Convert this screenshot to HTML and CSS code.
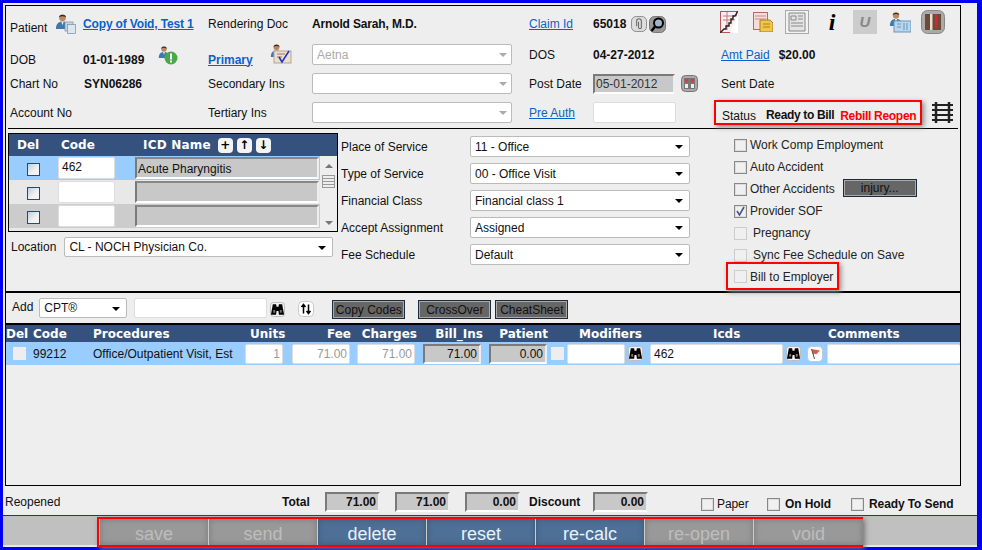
FILE: index.html
```html
<!DOCTYPE html>
<html lang="en">
<head>
<meta charset="utf-8">
<title>Claim</title>
<link rel="stylesheet" href="styles.css">
</head>
<body>
<svg class="defs" width="0" height="0" aria-hidden="true">
  <symbol id="person" viewBox="0 0 16 18">
    <circle cx="8" cy="5" r="3.6" fill="#b98a62"/><path d="M4.2 4.5C4.5 1 11.5 1 11.8 4.5 9 3 7 3 4.2 4.5Z" fill="#3a2a1c"/>
    <path d="M1 17c0-6 3-8 7-8s7 2 7 8Z" fill="#3f78ad"/><path d="M6.7 9h2.6L8 13Z" fill="#e8eef5"/>
  </symbol>
  <symbol id="binoc" viewBox="0 0 16 16">
    <rect x=".5" y=".5" width="15" height="15" rx="3" fill="#f2f2f2" stroke="#bbb"/>
    <path d="M3 2.500h3.500l.5 2.500h2l.5-2.500H13l2 11H9.500L9 9.500H7l-.5 4H1Z" fill="#000"/>
    <path d="M3.500 8.500h2v3h-2ZM10.500 8.500h2v3h-2Z" fill="#777"/>
  </symbol>
  <symbol id="roundbtn" viewBox="0 0 16 16">
    <rect x=".5" y=".5" width="15" height="15" rx="4" fill="#fff" stroke="#c8c8c8"/>
  </symbol>
</svg>

<div class="window">
  <div class="frame">
    <section class="header">
      <span class="label lower">Patient</span>
      <span class="with-icon span-val r1">
        <svg class="ico-pat" width="22" height="22" viewBox="0 0 22 22"><use href="#person" x="0" y="0" width="15" height="17"/><rect x="10" y="9" width="8" height="9" fill="#c5d4e3" stroke="#7a8ea3" stroke-width=".7"/><rect x="12.500" y="11.500" width="8" height="9" fill="#dce6f0" stroke="#7a8ea3" stroke-width=".7"/></svg>
        <a class="link bold tight" href="#">Copy of Void, Test 1</a>
      </span>
      <span class="label r1">Rendering Doc</span>
      <span class="value r1 doc">Arnold Sarah, M.D.</span>
      <a class="link r1" href="#">Claim Id</a>
      <span class="value claim-id r1">65018
        <svg class="ico-clip" width="16" height="16" viewBox="0 0 17 17"><rect x=".5" y=".5" width="16" height="16" rx="5" fill="#ddd" stroke="#888"/><path d="M6 11V5.500a2.200 2.200 0 0 1 5 0V12a1.400 1.400 0 0 1-3 0V6" fill="none" stroke="#666" stroke-width="1.100"/></svg>
        <svg class="ico-mag" width="17" height="17" viewBox="0 0 17 17"><rect x=".5" y=".5" width="16" height="16" rx="5" fill="#999" stroke="#777"/><circle cx="9.500" cy="7" r="4.500" fill="#9fb4c8" stroke="#000" stroke-width="2"/><path d="M6 10.500 2.500 15" stroke="#000" stroke-width="2.500"/></svg>
      </span>
      <div class="tools">
        <svg width="18" height="22" viewBox="0 0 18 22"><rect x=".5" y=".5" width="16" height="21" fill="#fbeeee" stroke="#b55"/><path d="M3 5h12M3 9h12M7 1v18" stroke="#c77"/><path d="M10 22h8V1Z" fill="#fff"/><path d="M0 22 4 18h2v-3h3v-3h2V8h2V5h2l3-5" fill="none" stroke="#222" stroke-width="1.400"/></svg>
        <svg width="20" height="20" viewBox="0 0 20 20"><rect x=".5" y=".5" width="14" height="17" fill="#f6dcd8" stroke="#b66"/><path d="M2 4h11M2 7h11" stroke="#c88"/><path d="M7 8h10l3 3v9H7Z" fill="#f2c64c" stroke="#a87f20"/><path d="M10 12h7M10 15h7" stroke="#a87f20"/></svg>
        <svg width="24" height="24" viewBox="0 0 24 24"><rect x=".5" y=".5" width="23" height="23" fill="#f2f2f2" stroke="#aaa"/><path d="M4 3h16v18H4Z" fill="#e4e4e4" stroke="#888"/><path d="M6 6h5v4H6ZM13 6h5M13 9h5M6 13h12M6 16h12" fill="none" stroke="#888"/></svg>
        <span class="tool-i">i</span>
        <span class="tool-u">U</span>
        <svg width="22" height="22" viewBox="0 0 22 22"><use href="#person" x="0" y="0" width="14" height="16"/><rect x="5" y="10" width="17" height="11" fill="#b9d6ef" stroke="#6d94b8"/><path d="M8 13h4M8 16h4M15 12v7M18 12v7" stroke="#6d94b8"/></svg>
        <svg width="24" height="24" viewBox="0 0 24 24"><rect x=".5" y=".5" width="23" height="23" rx="6" fill="#aaa" stroke="#888"/><rect x="4" y="4" width="16" height="16" fill="#6b4a38"/><rect x="9" y="4" width="2.500" height="16" fill="#e9dccf"/><rect x="14" y="4" width="2.500" height="11" fill="#d23"/><rect x="14" y="16" width="2.500" height="2" fill="#d23"/></svg>
      </div>

      <span class="label lower">DOB</span>
      <span class="value with-icon lower dob">01-01-1989
        <svg class="ico-alert" width="20" height="20" viewBox="0 0 20 20"><use href="#person" x="0" y="0" width="12" height="14"/><circle cx="13" cy="13" r="6.500" fill="#4aa84a"/><rect x="12" y="8.500" width="2" height="6" fill="#fff"/><rect x="12" y="15.500" width="2" height="2" fill="#fff"/></svg>
      </span>
      <span class="with-icon lower primary">
        <a class="link bold" href="#">Primary</a>
        <svg class="ico-prim" width="22" height="22" viewBox="0 0 22 22"><use href="#person" x="0" y="0" width="13" height="15"/><rect x="4" y="8" width="17" height="12" fill="#eadfce" stroke="#b7a68f"/><path d="M7 11h8M7 14h5" stroke="#b07060"/><path d="M9 14l3 5 7-11" fill="none" stroke="#2233cc" stroke-width="1.600"/></svg>
      </span>
      <div class="select disabled"><span>Aetna</span><i class="caret grey"></i></div>
      <span class="label">DOS</span>
      <span class="value">04-27-2012</span>
      <div class="right-cell amt"><a class="link" href="#">Amt Paid</a><span class="value">$20.00</span></div>

      <span class="label">Chart No</span>
      <span class="value span-val chart">SYN06286</span>
      <span class="label">Secondary Ins</span>
      <div class="select"><i class="caret grey"></i></div>
      <span class="label">Post Date</span>
      <span class="post-date">
        <span class="ro date">05-01-2012</span>
        <svg width="17" height="17" viewBox="0 0 17 17"><rect x=".5" y=".5" width="16" height="16" rx="4" fill="#aaa" stroke="#777"/><rect x="3" y="3" width="11" height="11" fill="#777"/><path d="M4 4h3v3H4ZM10 4h3v3h-3Z" fill="#e33"/><path d="M4 9h3v4H4ZM10 9h3v4h-3Z" fill="#eee"/></svg>
      </span>
      <span class="label right-cell sent">Sent Date</span>

      <span class="label">Account No</span>
      <span class="span-val"></span>
      <span class="label">Tertiary Ins</span>
      <div class="select"><i class="caret grey"></i></div>
      <a class="link" href="#">Pre Auth</a>
      <span class="input pre-auth"></span>
      <div class="right-cell status-wrap">
        <div class="status-box">
          <span class="label status-l">Status</span>
          <span class="value status-v">Ready to Bill</span>
          <span class="rebill">Rebill Reopen</span>
        </div>
        <svg class="ico-track" width="21" height="21" viewBox="0 0 21 21"><path d="M4 0v21M17 0v21" stroke="#222" stroke-width="2.500"/><path d="M0 3h21M0 8h21M0 13h21M0 18h21" stroke="#222" stroke-width="2.200"/></svg>
      </div>
    </section>
    <div class="rule-thin"></div>

    <section class="mid">
      <div class="mid-left">
        <div class="icd">
          <div class="icd-main">
            <div class="icd-head">
              <span class="h-del">Del</span><span class="h-code">Code</span><span class="h-name">ICD Name</span>
              <span class="mini">+</span><span class="mini">↑</span><span class="mini">↓</span>
            </div>
            <div class="icd-row sel">
              <span class="cell-del"><i class="cb-blue"></i></span><span class="input code">462</span><span class="ro name">Acute Pharyngitis</span>
            </div>
            <div class="icd-row alt1">
              <span class="cell-del"><i class="cb-blue"></i></span><span class="input code"></span><span class="ro name"></span>
            </div>
            <div class="icd-row alt2">
              <span class="cell-del"><i class="cb-blue"></i></span><span class="input code"></span><span class="ro name"></span>
            </div>
            <div class="icd-row alt1 stub"></div>
          </div>
          <div class="scroll">
            <i class="arrow up"></i>
            <span class="thumb"></span>
            <i class="arrow down"></i>
          </div>
        </div>
        <div class="location">
          <span class="label">Location</span>
          <div class="select loc"><span>CL - NOCH Physician Co.</span><i class="caret"></i></div>
        </div>
      </div>

      <div class="mid-fields">
        <span class="label">Place of Service</span><div class="select wide"><span>11 - Office</span><i class="caret"></i></div>
        <span class="label">Type of Service</span><div class="select wide"><span>00 - Office Visit</span><i class="caret"></i></div>
        <span class="label">Financial Class</span><div class="select wide"><span>Financial class 1</span><i class="caret"></i></div>
        <span class="label">Accept Assignment</span><div class="select wide"><span>Assigned</span><i class="caret"></i></div>
        <span class="label">Fee Schedule</span><div class="select wide"><span>Default</span><i class="caret"></i></div>
      </div>

      <div class="mid-checks">
        <div class="chk"><i class="cb"></i>Work Comp Employment</div>
        <div class="chk"><i class="cb"></i>Auto Accident</div>
        <div class="chk"><i class="cb"></i>Other Accidents<button class="btn injury" type="button">injury...</button></div>
        <div class="chk"><i class="cb on"><svg width="11" height="11" viewBox="0 0 11 11"><path d="M2 5l2.500 4L9 1" fill="none" stroke="#45558f" stroke-width="1.600"/></svg></i>Provider SOF</div>
        <div class="chk pad"><i class="cb plain"></i>Pregnancy</div>
        <div class="chk pad"><i class="cb plain"></i>Sync Fee Schedule on Save</div>
        <div class="chk bill"><i class="cb plain"></i>Bill to Employer</div>
      </div>
    </section>
    <div class="rule-thick"></div>

    <section class="add-row">
      <span class="label add-l">Add</span>
      <div class="select cpt"><span>CPT®</span><i class="caret"></i></div>
      <span class="input search"></span>
      <svg class="ico-b" width="15" height="15"><use href="#binoc"/></svg>
      <svg class="ico-sort" width="16" height="16" viewBox="0 0 16 16"><use href="#roundbtn"/><path d="M5.500 3.500v9M3.500 6l2-2.500L7.500 6M10.500 12.500v-9M8.500 10l2 2.500 2-2.500" fill="none" stroke="#000" stroke-width="1.500"/></svg>
      <button class="btn copy" type="button">Copy Codes</button>
      <button class="btn cross" type="button">CrossOver</button>
      <button class="btn cheat" type="button">CheatSheet</button>
    </section>

    <section class="proc">
      <div class="proc-head">
        <span class="p-del">Del</span><span>Code</span><span>Procedures</span>
        <span class="p-units">Units</span><span class="p-r6">Fee</span><span class="p-r6">Charges</span><span class="p-r6">Bill_Ins</span><span class="p-r3">Patient</span>
        <span class="p-mod">Modifiers</span><span class="p-icds">Icds</span><span class="p-com">Comments</span>
      </div>
      <div class="proc-row">
        <span class="p-cb"><i class="cb-flat"></i></span>
        <span>99212</span>
        <span>Office/Outpatient Visit, Est</span>
        <span class="cell"><span class="input num dim units">1</span></span>
        <span class="cell"><span class="input num dim money">71.00</span></span>
        <span class="cell"><span class="input num dim money">71.00</span></span>
        <span class="cell"><span class="ro num money">71.00</span></span>
        <span class="cell"><span class="ro num money">0.00</span></span>
        <span class="cell"><i class="cb-flat small"></i></span>
        <span class="cell"><span class="input modifiers"></span></span>
        <span class="cell"><svg class="ico-b" width="15" height="15"><use href="#binoc"/></svg></span>
        <span class="cell"><span class="input icds">462</span></span>
        <span class="cell"><svg class="ico-b" width="15" height="15"><use href="#binoc"/></svg></span>
        <span class="cell"><svg width="16" height="16" viewBox="0 0 16 16"><use href="#roundbtn"/><path d="M4 3l9 1.500-4 4-1.500-1L6.500 9Z" fill="#e0584a"/><path d="M4.500 3l3 10" stroke="#555"/></svg></span>
        <span class="cell"><span class="input comments"></span></span>
      </div>
    </section>
  </div>

  <footer class="totals">
    <span class="label reopened">Reopened</span>
    <span class="value total-l">Total</span>
    <span class="ro num tot">71.00</span>
    <span class="ro num tot">71.00</span>
    <span class="ro num tot">0.00</span>
    <span class="value disc-l">Discount</span>
    <span class="ro num tot">0.00</span>
    <div class="foot-checks">
      <div class="chk"><i class="cb"></i>Paper</div>
      <div class="chk strong"><i class="cb"></i>On Hold</div>
      <div class="chk strong"><i class="cb"></i>Ready To Send</div>
    </div>
  </footer>

  <nav class="actionbar">
    <div class="actions">
      <button class="act off" type="button">save</button>
      <button class="act off" type="button">send</button>
      <button class="act" type="button">delete</button>
      <button class="act" type="button">reset</button>
      <button class="act" type="button">re-calc</button>
      <button class="act off" type="button">re-open</button>
      <button class="act off" type="button">void</button>
    </div>
  </nav>
</div>
</body>
</html>
```
FILE: styles.css
```css
* { box-sizing: border-box; }
html, body { margin: 0; padding: 0; }
body { width: 982px; height: 550px; overflow: hidden; font: 12px/14px "Liberation Sans", Arial, sans-serif; color: #111; background: #00f; }
.defs { position: absolute; }
i { display: block; font-style: normal; }
svg { display: block; flex: none; }

.window { width: 982px; height: 550px; border: solid #0000f0; border-width: 3px 5px 3px 3px; background: #eee; display: flex; flex-direction: column; }
.frame { margin: 2px 0 0 2px; width: 956px; height: 481px; border: 1px solid #000; flex: none; }

.label { white-space: nowrap; }
.value { font-weight: bold; white-space: nowrap; }
.link { color: #0a62c9; text-decoration: underline; white-space: nowrap; }
.bold { font-weight: bold; }
.tight { letter-spacing: -.15px; }

.header { display: grid; grid-template-columns: 73px 125px 104px 217px 64px 128px 1fr; grid-template-rows: 34px 29px 29px 29px; align-items: center; padding-left: 4px; }
.header > .lower { position: relative; top: 5px; }
.r1 { margin-top: 2px; }
.doc { letter-spacing: -.15px; }
.with-icon { display: flex; align-items: center; white-space: nowrap; }
.span-val { min-width: 0; }
.ico-pat { margin: 0 6px 0 -28px; }
.dob { gap: 14px; }
.ico-alert { margin-top: -9px; }
.primary { gap: 17px; }
.ico-prim { margin-top: -11px; }
.chart { margin-left: 1px; }
.claim-id { display: flex; align-items: center; gap: 2px; }
.ico-clip { margin-left: 3px; }
.tools { display: grid; grid-template-columns: 33px 32px 35px 33px 36px 32px 24px; align-items: center; margin-left: -1px; margin-top: -3px; }
.tool-i { width: 24px; text-align: center; font: italic bold 24px/24px "Liberation Serif", serif; color: #000; }
.tool-u { width: 24px; height: 24px; background: #ccc; color: #888; text-align: center; font: italic bold 15px/24px "Liberation Sans", sans-serif; }
.amt { display: flex; gap: 9px; }
.select { position: relative; height: 21px; width: 200px; background: #fff; border: 1px solid #bbb; border-radius: 2px; display: flex; align-items: center; padding-left: 4px; }
.select.disabled { color: #aaa; }
.caret { position: absolute; right: 6px; top: 8px; width: 0; height: 0; border: solid transparent; border-width: 4px 4px 0; border-top-color: #000; }
.caret.grey { border-top-color: #aaa; right: 4px; }
.input { display: block; height: 21px; background: #fff; border: 1px solid #ddd; border-radius: 2px; line-height: 19px; padding: 0 3px; }
.ro { display: block; height: 20px; background: #c8c8c8; border: 2px solid; border-color: #7a7a7a #eee #fff #7a7a7a; line-height: 16px; padding: 0 1px; }
.num { text-align: right; padding-right: 2px; }
.dim { color: #999; }
.post-date { display: flex; align-items: center; gap: 6px; }
.date { width: 82px; height: 20px; color: #333; }
.pre-auth { width: 83px; }
.status-wrap { display: flex; align-items: center; gap: 10px; margin-left: -7px; }
.status-box { width: 208px; height: 25px; flex: none; border: 2px solid #f00; box-shadow: 2px 2px 5px #888; display: flex; align-items: center; padding-left: 6px; margin-top: -1px; white-space: nowrap; }
.status-l { margin-top: 7px; }
.status-v { margin-left: 10px; margin-top: 6px; letter-spacing: -.35px; }
.rebill { margin-left: 6px; color: #f00; font-weight: bold; margin-top: 8px; letter-spacing: -.3px; }

.rule-thin { height: 1px; margin: 1px 2px 0; background: #000; }
.rule-thick { height: 2px; background: #000; }

.mid { height: 162px; display: flex; padding: 4px 0 0 2px; }
.mid-left { width: 333px; flex: none; }
.icd { width: 330px; height: 99px; border: 1px solid #000; display: flex; overflow: hidden; }
.icd-main { width: 311px; flex: none; }
.icd-head { height: 22px; margin-right: -18px; background: #35527f; color: #fff; font: bold 12px/22px "DejaVu Sans", sans-serif; display: flex; align-items: center; position: relative; z-index: 1; }
.h-del { width: 52px; padding-left: 8px; }
.h-code { width: 82px; }
.h-name { margin-right: 7px; letter-spacing: .2px; }
.mini { width: 15px; height: 15px; margin-right: 4px; background: #f4f4f4; border-radius: 4px; color: #000; text-align: center; font: bold 12px/14px "DejaVu Sans", sans-serif; }
.icd-row { height: 24px; display: flex; align-items: center; }
.icd-row.stub { height: 3px; }
.sel { background: #9cf; }
.alt1 { background: #e8e8e8; }
.alt2 { background: #ccc; }
.cell-del { width: 47px; display: flex; justify-content: center; padding: 3px 0 0 1px; }
.cb-blue { width: 13px; height: 13px; border: 1px solid #1f4e6e; background: linear-gradient(135deg, #bcd0dc, #f2f2f2 60%); }
.code { width: 57px; height: 22px; margin: 0 20px 0 2px; }
.name { width: 184px; height: 22px; line-height: 20px; border-top-color: #888; }
.scroll { width: 18px; display: flex; flex-direction: column; align-items: center; padding-top: 30px; }
.arrow { width: 0; height: 0; border: solid transparent; border-width: 0 4px 4px; border-bottom-color: #777; }
.arrow.down { border-width: 4px 4px 0; border-top-color: #777; border-bottom-color: transparent; margin-top: 33px; }
.thumb { width: 13px; height: 13px; margin-top: 7px; flex: none; background: repeating-linear-gradient(#eee 0 2px, #999 2px 3px); border: 1px solid #999; }
.location { display: flex; align-items: center; margin-top: 5px; padding-left: 3px; gap: 8px; }
.select.loc { width: 269px; height: 20px; }

.mid-fields { width: 349px; flex: none; padding-top: 3px; display: grid; grid-template-columns: 129px 220px; grid-auto-rows: 21px; row-gap: 6px; align-items: center; align-content: start; }
.select.wide { width: 220px; }

.mid-checks { margin-left: 44px; padding-top: 1px; display: flex; flex-direction: column; color: #222; }
.chk { display: flex; flex: none; align-items: center; height: 22px; white-space: nowrap; }
.cb { width: 13px; height: 13px; margin-right: 3px; background: #f0f0f0; border: 1px solid #888; box-shadow: inset 0 0 0 1px #ddd; }
.cb.plain { border-color: #ccc; box-shadow: none; }
.chk.pad .cb { margin-right: 6px; }
.bill { width: 113px; height: 28px; margin: -4px 0 0 -8px; padding: 1px 0 0 6px; border: 2px solid #f00; box-shadow: 2px 2px 5px #888; }
.btn { font: 12px/14px "Liberation Sans", sans-serif; color: #111; background: #666; border: 1px solid #1c2a3e; box-shadow: inset 0 0 0 1px #aaa; padding: 0; height: 19px; }
.injury { width: 74px; height: 18px; margin-left: 8px; margin-top: -2px; }

.add-row { height: 30px; display: flex; align-items: center; }
.add-l { margin-left: 6px; margin-top: -2px; }
.select.cpt { width: 88px; height: 20px; margin: 0 0 0 6px; }
.search { width: 133px; height: 20px; margin-left: 7px; }
.ico-b { margin-left: 3px; }
.add-row > .ico-b { margin-top: 2px; }
.ico-sort { margin: 2px 0 0 13px; }
.copy { width: 73px; margin: 3px 0 0 18px; }
.cross { width: 73px; margin: 3px 0 0 13px; }
.cheat { width: 73px; margin: 3px 0 0 4px; }

.proc { border-top: 2px solid #000; }
.proc-head, .proc-row { display: grid; grid-template-columns: 27px 60px 152px 47px 65px 66px 66px 62px 16px 61px 22px 136px 21px 20px 133px; align-items: center; }
.proc-head { height: 17px; background: #35527f; color: #fff; font: bold 12px/19px "DejaVu Sans", sans-serif; }
.p-units { padding-left: 5px; }
.p-r6 { text-align: right; padding-right: 6px; }
.p-r3 { text-align: right; padding-right: 3px; }
.p-mod { grid-column: 9 / 12; padding-left: 28px; }
.p-icds { grid-column: 12 / 15; padding-left: 63px; }
.p-com { padding-left: 1px; }
.proc-row { height: 23px; background: #9cf; white-space: nowrap; }
.p-cb { padding-left: 7px; }
.cb-flat { width: 13px; height: 13px; background: #eee; }
.cell { display: block; }
.proc-row .input, .proc-row .ro { height: 20px; }
.proc-row .input { line-height: 18px; }
.units { width: 38px; }
.money { width: 58px; }
.modifiers { width: 58px; }
.icds { width: 133px; }
.comments { width: 133px; border-right: 0; }
.proc-row .ico-b { margin-left: 0; }

.totals { height: 29px; display: flex; align-items: center; padding-top: 3px; }
.reopened { margin-left: 2px; width: 277px; }
.total-l { width: 43px; }
.tot { width: 55px; margin-right: 15px; height: 20px; font-weight: bold; }
.disc-l { width: 64px; margin-left: -6px; }
.foot-checks { display: flex; padding-top: 4px; margin-left: 38px; letter-spacing: -.1px; }
.foot-checks .chk:nth-child(1) { width: 66px; }
.foot-checks .chk:nth-child(2) { width: 84px; }
.foot-checks .cb { margin-right: 5px; }
.foot-checks .chk:nth-child(1) .cb { margin-right: 3px; }
.strong { font-weight: bold; }

.actionbar { flex: none; height: 32px; background: #c0c0c0; border-top: 1px solid #2a3a50; border-bottom: 2px solid #e8e8e8; display: flex; padding: 1px 0 0 94px; }
.actions { width: 766px; height: 30px; border: 2px solid #f00; display: flex; box-shadow: 2px 2px 5px #777; padding: 0 1px; margin-bottom: -1px; }
.act { flex: 0 0 109px; border: 0; border-right: 1px solid #ccc; background: #4f7096; box-shadow: inset 0 0 6px #3a5573; color: #e8f2fa; font: 18px/26px "Liberation Sans", sans-serif; padding: 2px 0 0; }
.act:last-child { border-right: 0; }
.act.off { background: #999; box-shadow: inset 0 0 6px #777; color: #bdbdbd; }
```
